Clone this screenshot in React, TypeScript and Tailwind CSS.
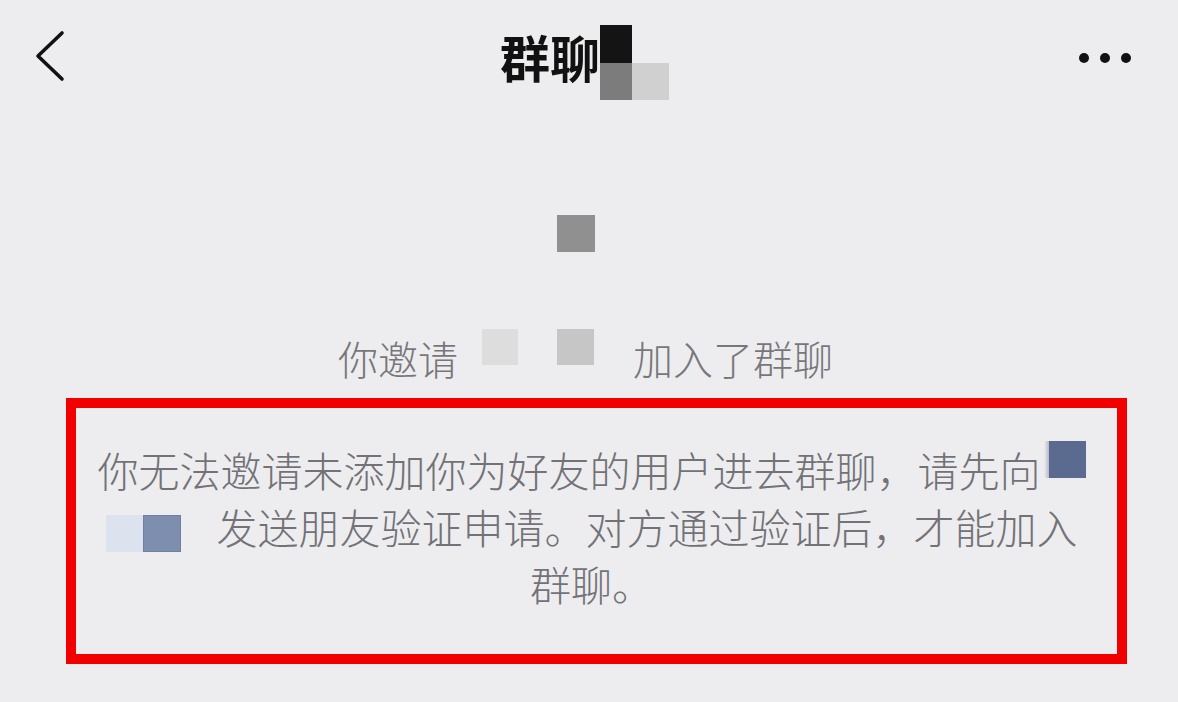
import React from 'react';

const cjk = { fontFamily: '"Noto Sans CJK SC", "Noto Sans", sans-serif' };

function Header() {
  return (
    <div className="flex h-[130px] items-start">
      {/* back chevron */}
      <svg className="ml-[34px] mt-[30px]" width="32" height="52" viewBox="0 0 32 52" fill="none">
        <path d="M28 3 L4 26 L28 49" stroke="#111" strokeWidth="3.6" strokeLinecap="round" strokeLinejoin="round" />
      </svg>

      <div className="ml-[434px] flex items-start pt-[25px]">
        <span className="mt-[6px] text-[50px] font-bold leading-[50px] text-[#111]">群聊</span>
        <div className="grid grid-cols-[32px_37px] grid-rows-[38px_37px]">
          <div className="bg-[#141414]" />
          <div />
          <div className="bg-[#7c7c7c]" />
          <div className="bg-[#d0d0d0]" />
        </div>
      </div>

      <div className="ml-auto mr-[47px] mt-[53px] flex gap-[11px]">
        <span className="h-[10px] w-[10px] rounded-full bg-[#111]" />
        <span className="h-[10px] w-[10px] rounded-full bg-[#111]" />
        <span className="h-[10px] w-[10px] rounded-full bg-[#111]" />
      </div>
    </div>
  );
}

function InviteNotice() {
  return (
    <div className="text-[#77777b]">
      <div className="ml-[557px] mt-[85px] h-[37px] w-[38px] bg-[#909090]" />
      <div className="mt-[77px] flex items-start">
        <span className="ml-[338px] mt-[9px] text-[40px] font-light leading-[40px]">你邀请</span>
        <span className="ml-[24px] h-[36px] w-[36px] bg-[#dddddd]" />
        <span className="ml-[39px] h-[36px] w-[37px] bg-[#c6c6c6]" />
        <span className="ml-[39px] mt-[9px] text-[40px] font-light leading-[40px]">加入了群聊</span>
      </div>
    </div>
  );
}

function WarningBox() {
  return (
    <div className="ml-[66px] mt-[20px] h-[266px] w-[1061px] border-[10px] border-[#f20000] pr-[10px] pt-[33px] text-[41px] font-light leading-[57px] text-[#727277]">
      <div className="whitespace-nowrap text-center">
        你无法邀请未添加你为好友的用户进去群聊，请先向
        <span className="ml-[3px] inline-block h-[37px] w-[5px] bg-gradient-to-r from-[#ededef] to-[#b8bbc4] align-top" />
        <span className="inline-block h-[37px] w-[37px] bg-[#5b6b8f] align-top" />
      </div>
      <div className="whitespace-nowrap text-center">
        <span className="mt-[17px] inline-block h-[37px] w-[37px] bg-[#dde3ee] align-top" />
        <span className="mt-[17px] inline-block h-[37px] w-[38px] border border-[#6f80a2] bg-[#7d8eae] align-top" />
        <span className="ml-[36px]">发送朋友验证申请。对方通过验证后，才能加入</span>
      </div>
      <div className="whitespace-nowrap text-center">群聊。</div>
    </div>
  );
}

export default function App() {
  return (
    <div className="h-[702px] w-[1178px] overflow-hidden bg-[#ededef]" style={cjk}>
      <Header />
      <InviteNotice />
      <WarningBox />
    </div>
  );
}
